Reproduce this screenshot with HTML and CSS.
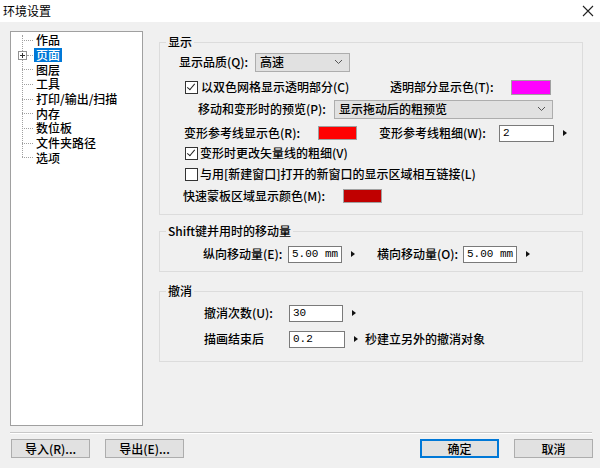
FILE: index.html
```html
<!DOCTYPE html>
<html lang="zh-CN">
<head>
<meta charset="utf-8">
<title>环境设置</title>
<link rel="stylesheet" href="styles.css">
</head>
<body>
<div class="dialog">
  <div class="titlebar">
    <span class="title">环境设置</span>
    <svg class="close" width="12" height="12" viewBox="0 0 12 12"><path d="M1 1 L11 11 M11 1 L1 11" stroke="#222" stroke-width="1.1" fill="none"/></svg>
  </div>
  <div class="main">
    <div class="tree">
      <ul class="tree-list">
        <li class="item"><span class="dash"></span><span class="txt">作品</span></li>
        <li class="item"><span class="plus"></span><span class="dash short"></span><span class="txt selected">页面</span></li>
        <li class="item"><span class="dash"></span><span class="txt">图层</span></li>
        <li class="item"><span class="dash"></span><span class="txt">工具</span></li>
        <li class="item"><span class="dash"></span><span class="txt">打印/输出/扫描</span></li>
        <li class="item"><span class="dash"></span><span class="txt">内存</span></li>
        <li class="item"><span class="dash"></span><span class="txt">数位板</span></li>
        <li class="item"><span class="dash"></span><span class="txt">文件夹路径</span></li>
        <li class="item last"><span class="dash"></span><span class="txt">选项</span></li>
      </ul>
    </div>
    <div class="panel">
      <fieldset class="group g1">
        <legend>显示</legend>
        <div class="row r1">
          <span class="lbl w-quality">显示品质(Q):</span>
          <span class="select s-quality">高速<svg class="chev" width="9" height="6" viewBox="0 0 9 6"><path d="M1 1 L4.5 4.5 L8 1" stroke="#555" stroke-width="1" fill="none"/></svg></span>
        </div>
        <div class="row r2">
          <span class="check on"></span>
          <span class="lbl w-grid">以双色网格显示透明部分(C)</span>
          <span class="lbl w-trans">透明部分显示色(T):</span>
          <span class="swatch sw-magenta"></span>
        </div>
        <div class="row r3">
          <span class="lbl w-preview">移动和变形时的预览(P):</span>
          <span class="select s-preview">显示拖动后的粗预览<svg class="chev" width="9" height="6" viewBox="0 0 9 6"><path d="M1 1 L4.5 4.5 L8 1" stroke="#555" stroke-width="1" fill="none"/></svg></span>
        </div>
        <div class="row r4">
          <span class="lbl w-guide">变形参考线显示色(R):</span>
          <span class="swatch sw-red"></span>
          <span class="lbl w-thick">变形参考线粗细(W):</span>
          <span class="input i-thick">2</span>
          <span class="arrow"></span>
        </div>
        <div class="row r5">
          <span class="check on"></span>
          <span class="lbl gap-l">变形时更改矢量线的粗细(V)</span>
        </div>
        <div class="row r6">
          <span class="check"></span>
          <span class="lbl gap-l">与用[新建窗口]打开的新窗口的显示区域相互链接(L)</span>
        </div>
        <div class="row r7">
          <span class="lbl w-mask">快速蒙板区域显示颜色(M):</span>
          <span class="swatch sw-dark"></span>
        </div>
      </fieldset>

      <fieldset class="group g2">
        <legend>Shift键并用时的移动量</legend>
        <div class="row r8">
          <span class="lbl w-vert">纵向移动量(E):</span>
          <span class="input i-mm">5.00 mm</span>
          <span class="arrow"></span>
          <span class="lbl w-horz">横向移动量(O):</span>
          <span class="input i-mm">5.00 mm</span>
          <span class="arrow"></span>
        </div>
      </fieldset>

      <fieldset class="group g3">
        <legend>撤消</legend>
        <div class="row r9">
          <span class="lbl w-undo">撤消次数(U):</span>
          <span class="input i-mm">30</span>
          <span class="arrow"></span>
        </div>
        <div class="row r10">
          <span class="lbl w-undo">描画结束后</span>
          <span class="input i-sec">0.2</span>
          <span class="arrow"></span>
          <span class="lbl after">秒建立另外的撤消对象</span>
        </div>
      </fieldset>
    </div>
  </div>
  <div class="separator"></div>
  <div class="footer">
    <div class="left-btns">
      <button class="btn">导入(R)...</button>
      <button class="btn">导出(E)...</button>
    </div>
    <div class="right-btns">
      <button class="btn primary">确定</button>
      <button class="btn">取消</button>
    </div>
  </div>
</div>
</body>
</html>
```

FILE: styles.css
```css
html, body {
  margin: 0;
  padding: 0;
}
body {
  width: 600px;
  height: 468px;
  background: #f0f0f0;
  font-family: "Noto Sans CJK SC", "Noto Sans", sans-serif;
  font-size: 12px;
  font-weight: 500;
  color: #000;
  overflow: hidden;
}
.dialog {
  display: flex;
  flex-direction: column;
  height: 468px;
}
.titlebar {
  height: 22px;
  background: #fff;
  display: flex;
  align-items: center;
  justify-content: space-between;
  padding: 0 6px 0 3px;
  flex: none;
}
.title {
  font-size: 12px;
  font-weight: 400;
  line-height: 14px;
  color: #000;
}
.close {
  display: block;
}
.main {
  display: flex;
  height: 404px;
  flex: none;
}
.tree {
  margin: 9px 0 0 10px;
  width: 131px;
  height: 393px;
  background: #fff;
  border: 1px solid #a0a0a0;
  flex: none;
  position: relative;
}
.tree-list {
  list-style: none;
  margin: 0;
  padding: 1px 0 0 11px;
  position: relative;
}
.tree-list::before {
  content: "";
  position: absolute;
  left: 11px;
  top: 3px;
  height: 122px;
  border-left: 1px dotted #a0a0a0;
}
.item {
  height: 14.7px;
  display: flex;
  align-items: center;
  position: relative;
}
.dash {
  width: 11px;
  border-top: 1px dotted #a0a0a0;
  margin-right: 2px;
  flex: none;
}
.dash.short {
  width: 6px;
  margin-left: 5px;
}
.plus {
  position: absolute;
  left: -4px;
  top: 3px;
  width: 7px;
  height: 7px;
  border: 1px solid #919191;
  background: #fff;
}
.plus::before {
  content: "";
  position: absolute;
  left: 1px;
  top: 3px;
  width: 5px;
  height: 1px;
  background: #333;
}
.plus::after {
  content: "";
  position: absolute;
  left: 3px;
  top: 1px;
  width: 1px;
  height: 5px;
  background: #333;
}
.txt {
  line-height: 14px;
  padding: 0 1px;
}
.selected {
  background: #0078d7;
  color: #fff;
  padding: 0 2px 0 2px;
  margin-left: -1px;
}
.panel {
  margin-left: 16px;
  width: 424px;
  display: flex;
  flex-direction: column;
  padding-top: 13px;
}
.group {
  margin: 0;
  padding: 0;
  border: 1px solid #dcdcdc;
  min-width: 0;
}
.group legend {
  padding: 0 2px;
  margin-left: 6px;
  line-height: 14px;
  font-size: 12px;
}
.g1 { padding-bottom: 8px; }
.g2 { margin-top: 9px; padding-bottom: 7px; }
.g3 { margin-top: 12px; padding-bottom: 12px; }
.row {
  height: 20px;
  display: flex;
  align-items: center;
  white-space: nowrap;
}
.lbl {
  line-height: 14px;
  flex: none;
}
.gap-l { margin-left: 2px; }
.r1 { margin-top: 3px; padding-left: 19px; }
.r2 { margin-top: 5px; padding-left: 25px; }
.r3 { margin-top: 2px; padding-left: 38px; }
.r4 { margin-top: 4px; padding-left: 24px; }
.r5 { margin-top: 0; padding-left: 25px; }
.r6 { margin-top: 1px; padding-left: 25px; }
.r7 { margin-top: 2px; padding-left: 23px; }
.r8 { margin-top: 6px; padding-left: 43px; }
.r9 { margin-top: 5px; padding-left: 44px; }
.r10 { margin-top: 6px; padding-left: 44px; }

.w-quality { width: 76px; }
.w-grid { width: 189px; margin-left: 3px; }
.w-trans { width: 121px; }
.w-preview { width: 136px; }
.w-guide { width: 134px; }
.w-thick { width: 120px; margin-left: 22px; }
.w-mask { width: 160px; }
.w-vert { width: 85px; }
.w-horz { width: 86px; margin-left: 22px; }
.w-undo { width: 85px; }
.after { margin-left: 7px; }

.select {
  height: 17px;
  border: 1px solid #adadad;
  background: #e1e1e1;
  display: flex;
  align-items: center;
  justify-content: space-between;
  padding: 0 6px 0 4px;
  line-height: 14px;
  box-sizing: content-box;
}
.s-quality { width: 83px; }
.s-preview { width: 207px; }
.chev { display: block; }

.check {
  width: 11px;
  height: 11px;
  border: 1px solid #333;
  background: #fff;
  position: relative;
  flex: none;
}
.check.on::after {
  content: "";
  position: absolute;
  left: 3px;
  top: 0px;
  width: 3px;
  height: 7px;
  border-right: 1.3px solid #222;
  border-bottom: 1.3px solid #222;
  transform: rotate(40deg);
}
.swatch {
  height: 14px;
  border: 1px solid #a0a0a0;
  box-sizing: border-box;
  flex: none;
}
.sw-magenta { width: 40px; height: 15px; background: #ff00ff; }
.sw-red { width: 39px; background: #ff0000; }
.sw-dark { width: 39px; background: #c00000; }

.input {
  height: 17px;
  border: 1px solid #7a7a7a;
  background: #fff;
  box-sizing: border-box;
  padding: 0 3px;
  line-height: 15px;
  font-family: "Liberation Mono", "Noto Sans CJK SC", monospace;
  font-size: 11px;
  font-weight: 400;
  flex: none;
}
.i-thick { width: 55px; }
.i-mm { width: 54px; }
.i-sec { width: 56px; }
.arrow {
  width: 0;
  height: 0;
  border-top: 3.5px solid transparent;
  border-bottom: 3.5px solid transparent;
  border-left: 4px solid #111;
  margin-left: 9px;
  flex: none;
}
.separator {
  margin: 6px 8px 0 10px;
  height: 1px;
  background: #c8c8c8;
  border-bottom: 1px solid #fff;
  flex: none;
}
.footer {
  display: flex;
  justify-content: space-between;
  padding: 5px 7px 0 11px;
}
.left-btns, .right-btns {
  display: flex;
  gap: 15px;
}
.btn {
  width: 79px;
  height: 19px;
  margin: 0;
  padding: 0;
  border: 1px solid #adadad;
  background: #e1e1e1;
  font-family: "Noto Sans CJK SC", "Noto Sans", sans-serif;
  font-size: 12px;
  font-weight: 500;
  line-height: 14px;
  color: #000;
}
.primary {
  border: 1px solid #0078d7;
  box-shadow: inset 0 0 0 1px #0078d7;
}
```
